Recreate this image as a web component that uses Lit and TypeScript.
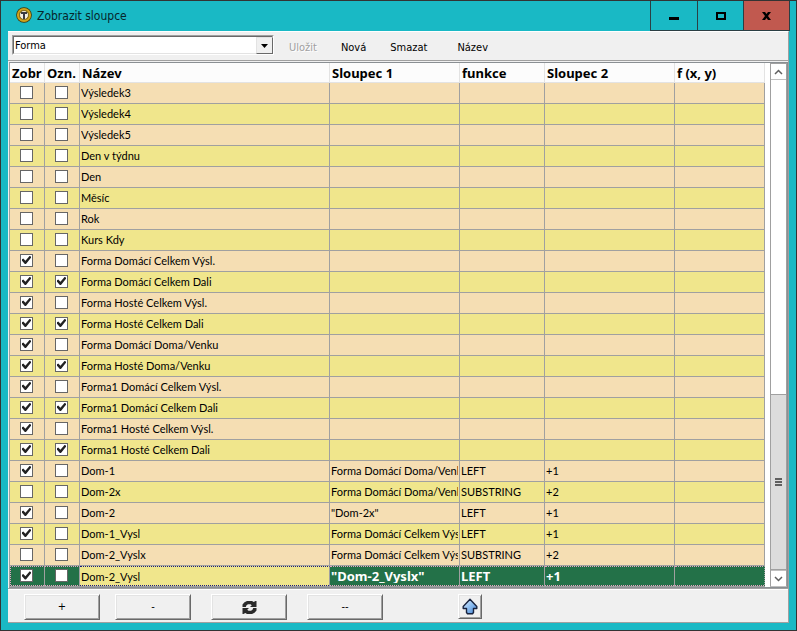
import { LitElement, html, css } from "lit";
import { customElement, state } from "lit/decorators.js";
import { classMap } from "lit/directives/class-map.js";

interface Row {
  show: boolean;
  mark: boolean;
  name: string;
  col1?: string;
  fn?: string;
  col2?: string;
}

const row = (show: number, mark: number, name: string, col1 = "", fn = "", col2 = ""): Row => ({
  show: !!show,
  mark: !!mark,
  name,
  col1,
  fn,
  col2,
});

@customElement("app-root")
export class AppRoot extends LitElement {
  static styles = css`
    :host {
      display: block;
      height: 100vh;
      font: 11px/14px "DejaVu Sans Condensed", Tahoma, "DejaVu Sans", sans-serif;
      color: #000;
    }
    * {
      box-sizing: border-box;
    }
    button,
    select {
      font: inherit;
      color: inherit;
      margin: 0;
      padding: 0;
      border-radius: 0;
    }
    .window {
      height: 100%;
      display: flex;
      flex-direction: column;
      background: #19b9c5;
      border: 1px solid #333;
      padding: 0 7px 7px;
      overflow: hidden;
    }
    .titlebar {
      flex: none;
      height: 30px;
      display: flex;
      align-items: flex-start;
      margin-right: -1px;
    }
    .logo {
      width: 16px;
      height: 16px;
      margin: 6px 5px 0 8px;
      flex: none;
    }
    .title {
      flex: 1;
      margin: 0;
      font-size: 12px;
      line-height: 30px;
      font-weight: normal;
      color: #06262b;
    }
    .sys {
      width: 47px;
      height: 30px;
      border: 1px solid #2b3f44;
      border-top: 0;
      border-right: 0;
      background: #19b9c5;
      display: grid;
      place-items: center;
    }
    .sys.max {
      width: 46px;
    }
    .sys.close {
      background: #c1594f;
      border-right: 1px solid #2b3f44;
    }
    .client {
      flex: 1;
      min-height: 0;
      display: flex;
      flex-direction: column;
      background: #f0f0f0;
      border-right: 1px solid #a0a0a0;
      border-bottom: 1px solid #a0a0a0;
      border-top: 1px solid #fff;
    }
    .toolbar {
      flex: none;
      height: 29px;
      display: flex;
      align-items: flex-start;
      padding: 3px 0 0 4px;
      border-bottom: 1px solid #a0a0a0;
    }
    .combo {
      position: relative;
      width: 262px;
      height: 20px;
      border: 1px solid #fff;
      border-top-color: #a0a0a0;
      border-left-color: #a0a0a0;
    }
    .combo select {
      appearance: none;
      display: block;
      width: 100%;
      height: 100%;
      border: 1px solid #e3e3e3;
      border-top-color: #696969;
      border-left-color: #696969;
      background: #fff;
      padding-left: 1px;
      padding-top: 1px;
      outline: 0;
    }
    .drop {
      position: absolute;
      top: 1px;
      right: 0;
      bottom: 0;
      width: 17px;
      background: #f0f0f0;
      border: 1px solid #696969;
      border-top-color: #e3e3e3;
      border-left-color: #e3e3e3;
      display: grid;
      place-items: center;
      pointer-events: none;
    }
    .tools {
      display: flex;
      gap: 24px;
      margin-left: 15px;
      padding-top: 1px;
    }
    .tool {
      border: 0;
      background: none;
      height: 24px;
    }
    .tool:disabled {
      color: #a0a0a0;
      text-shadow: 1px 1px #fff;
    }
    .tool:last-child {
      margin-left: 6px;
    }
    .grid {
      flex: 1;
      min-height: 0;
      margin: 1px 0 0 1px;
      display: flex;
      background: #fff;
      border: 1px solid #8a8f93;
      border-left-color: #a0a0a0;
      overflow: hidden;
    }
    .rows {
      flex: 1;
      min-width: 0;
      overflow: hidden;
      padding-right: 5px;
    }
    table {
      width: 100%;
      table-layout: fixed;
      border-collapse: separate;
      border-spacing: 0;
    }
    .c-check {
      width: 35px;
    }
    .c-name {
      width: 250px;
    }
    .c-wide {
      width: 130px;
    }
    .c-fn {
      width: 85px;
    }
    th {
      height: 20px;
      padding: 0 0 0 2px;
      text-align: left;
      font: bold 13px/18px "Noto Sans", Tahoma, sans-serif;
      white-space: nowrap;
      background: #fcfcfc;
      border-right: 1px solid #e3e3e3;
      border-bottom: 1px solid #e3e3e3;
    }
    td {
      height: 21px;
      padding: 0 1px;
      font: 11px/14px Lato, Tahoma, sans-serif;
      border-right: 1px solid #a0a0a0;
      border-bottom: 1px solid #a0a0a0;
    }
    .text {
      overflow: hidden;
      white-space: nowrap;
    }
    td.tick {
      padding: 0 1px 2px 0;
      line-height: 0;
      text-align: center;
    }
    tr.wheat td {
      background: #f5deb3;
    }
    tr.khaki td {
      background: #f0e68c;
    }
    tr.selected td {
      background: #237148 linear-gradient(90deg, #e6a3c4 50%, transparent 50%) 0 100% / 2px 1px repeat-x;
      border-top: 1px dotted #e6a3c4;
    }
    tr.selected td:not(.name) {
      padding-bottom: 2px;
      color: #fff;
      font: bold 13px/14px "Noto Sans", Tahoma, sans-serif;
    }
    tr.selected td.tick {
      line-height: 0;
    }
    tr.selected td:first-child {
      border-left: 1px dotted #e6a3c4;
      padding-right: 2px;
    }
    tr.selected td:last-child {
      border-right-style: dotted;
    }
    tr.selected td.name {
      background-color: #f0e68c;
      background-image: linear-gradient(90deg, #1a1a80 50%, transparent 50%);
      border-top-color: #1a1a80;
    }
    .box {
      appearance: none;
      width: 13px;
      height: 13px;
      margin: 0;
      border: 1px solid #666;
      background: #fff;
      display: inline-grid;
      place-items: center;
      vertical-align: middle;
    }
    .box:checked::before {
      content: "";
      width: 9px;
      height: 9px;
      background: #222;
      clip-path: polygon(0 42%, 14% 34%, 38% 58%, 86% 4%, 100% 14%, 100% 26%, 44% 94%, 32% 94%, 0 58%);
    }
    .scroll {
      flex: none;
      width: 17px;
      display: flex;
      flex-direction: column;
      border: 1px solid #a0a0a0;
      border-bottom-color: #c0c0c0;
    }
    .arrow {
      flex: none;
      height: 16px;
      border: 0;
      background: #fff;
      display: grid;
      place-items: center;
    }
    .arrow.up {
      border-bottom: 1px solid #c0c0c0;
    }
    .arrow.down {
      border-top: 1px solid #c0c0c0;
    }
    .track {
      flex: 1;
      display: flex;
      flex-direction: column;
    }
    .before {
      flex: 317;
    }
    .thumb {
      flex: 175;
      background: #dcdcdc;
      border-top: 1px solid #a0a0a0;
      border-bottom: 1px solid #a0a0a0;
      display: grid;
      place-items: center;
    }
    .bottom {
      flex: none;
      display: flex;
      align-items: flex-start;
      height: 34px;
      border-top: 1px solid #a0a0a0;
      box-shadow: inset 0 1px #fff;
      padding: 5px 0 0 16px;
    }
    .push {
      width: 76px;
      height: 26px;
      margin-right: 20px;
      background: #f0f0f0;
      border: 1px solid #696969;
      border-top-color: #fff;
      border-left-color: #fff;
      box-shadow: inset 1px 1px #e3e3e3, inset -1px -1px #a0a0a0;
      display: grid;
      place-items: center;
    }
    .push:first-child {
      margin-right: 15px;
    }
    .push.small {
      width: 24px;
      height: 25px;
      margin-left: 55px;
    }
  `;

  @state() private rows: Row[] = [
    row(0, 0, "Výsledek3"),
    row(0, 0, "Výsledek4"),
    row(0, 0, "Výsledek5"),
    row(0, 0, "Den v týdnu"),
    row(0, 0, "Den"),
    row(0, 0, "Měsíc"),
    row(0, 0, "Rok"),
    row(0, 0, "Kurs Kdy"),
    row(1, 0, "Forma Domácí Celkem Výsl."),
    row(1, 1, "Forma Domácí Celkem Dali"),
    row(1, 0, "Forma Hosté Celkem Výsl."),
    row(1, 1, "Forma Hosté Celkem Dali"),
    row(1, 0, "Forma Domácí Doma/Venku"),
    row(1, 1, "Forma Hosté Doma/Venku"),
    row(1, 0, "Forma1 Domácí Celkem Výsl."),
    row(1, 1, "Forma1 Domácí Celkem Dali"),
    row(1, 0, "Forma1 Hosté Celkem Výsl."),
    row(1, 1, "Forma1 Hosté Celkem Dali"),
    row(1, 0, "Dom-1", "Forma Domácí Doma/Venku", "LEFT", "+1"),
    row(0, 0, "Dom-2x", "Forma Domácí Doma/Venku", "SUBSTRING", "+2"),
    row(1, 0, "Dom-2", '"Dom-2x"', "LEFT", "+1"),
    row(1, 0, "Dom-1_Vysl", "Forma Domácí Celkem Výsl", "LEFT", "+1"),
    row(0, 0, "Dom-2_Vyslx", "Forma Domácí Celkem Výsl", "SUBSTRING", "+2"),
    row(1, 0, "Dom-2_Vysl", '"Dom-2_Vyslx"', "LEFT", "+1"),
  ];

  @state() private selected = 23;

  private renderRow(r: Row, i: number) {
    return html`<tr
      class=${classMap({ wheat: i % 2 === 0, khaki: i % 2 === 1, selected: i === this.selected })}
      @click=${() => (this.selected = i)}
    >
      <td class="tick"><input class="box" type="checkbox" aria-label="Zobrazit ${r.name}" .checked=${r.show} /></td>
      <td class="tick"><input class="box" type="checkbox" aria-label="Označit ${r.name}" .checked=${r.mark} /></td>
      <td class="name"><div class="text">${r.name}</div></td>
      <td><div class="text">${r.col1}</div></td>
      <td><div class="text">${r.fn}</div></td>
      <td><div class="text">${r.col2}</div></td>
      <td></td>
    </tr>`;
  }

  render() {
    return html`<div class="window">
      <header class="titlebar">
        <svg class="logo" viewBox="0 0 16 16" aria-hidden="true">
          <circle cx="8" cy="8" r="7.800" fill="#3f3208" />
          <circle cx="8" cy="8" r="6" fill="none" stroke="#cfa31c" stroke-width="2.200" />
          <circle cx="8" cy="8" r="4.500" fill="#f4f0e4" stroke="#8a6f14" stroke-width="1" />
          <path d="M5 5h6v2H9v5H7V7H5z" fill="#3a3a42" />
        </svg>
        <h1 class="title">Zobrazit sloupce</h1>
        <button class="sys" aria-label="Minimalizovat">
          <svg width="10" height="10"><path d="M0 6h10v3H0z" /></svg>
        </button>
        <button class="sys max" aria-label="Maximalizovat">
          <svg width="10" height="8"><path d="M1 1h8v6H1z" fill="none" stroke="#000" stroke-width="2" /></svg>
        </button>
        <button class="sys close" aria-label="Zavřít">
          <svg width="9" height="8"><path d="M0 0h3l1.500 2L6 0h3L6 4l3 4H6L4.500 6 3 8H0l3-4z" /></svg>
        </button>
      </header>
      <main class="client">
        <div class="toolbar">
          <div class="combo">
            <select aria-label="Šablona">
              <option>Forma</option>
            </select>
            <span class="drop"><svg width="7" height="4"><path d="M0 0h7L3.500 4z" /></svg></span>
          </div>
          <div class="tools">
            <button class="tool" disabled>Uložit</button>
            <button class="tool">Nová</button>
            <button class="tool">Smazat</button>
            <button class="tool">Název</button>
          </div>
        </div>
        <div class="grid">
          <div class="rows">
            <table>
              <colgroup>
                <col class="c-check" />
                <col class="c-check" />
                <col class="c-name" />
                <col class="c-wide" />
                <col class="c-fn" />
                <col class="c-wide" />
                <col />
              </colgroup>
              <thead>
                <tr>
                  <th>Zobr</th>
                  <th>Ozn.</th>
                  <th>Název</th>
                  <th>Sloupec 1</th>
                  <th>funkce</th>
                  <th>Sloupec 2</th>
                  <th>f (x, y)</th>
                </tr>
              </thead>
              <tbody>
                ${this.rows.map((r, i) => this.renderRow(r, i))}
              </tbody>
            </table>
          </div>
          <div class="scroll">
            <button class="arrow up" aria-label="Nahoru">
              <svg width="9" height="6"><path d="M1 5l3.500-3.500L8 5" fill="none" stroke="#606060" stroke-width="1.500" /></svg>
            </button>
            <div class="track">
              <div class="before"></div>
              <div class="thumb">
                <svg width="7" height="8"><path d="M0 0h7v2H0zM0 3h7v2H0zM0 6h7v2H0z" fill="#606060" /></svg>
              </div>
            </div>
            <button class="arrow down" aria-label="Dolů">
              <svg width="9" height="6"><path d="M1 1l3.500 3.500L8 1" fill="none" stroke="#606060" stroke-width="1.500" /></svg>
            </button>
          </div>
        </div>
        <footer class="bottom">
          <button class="push">+</button>
          <button class="push">-</button>
          <button class="push" aria-label="Obnovit">
            <svg width="15" height="13" viewBox="0 0 15 13">
              <path
                d="M.5 6V3.500L2.500 1.200 5 0h5l1.700 1L13.500 0H14.500v6H8L9.800 4.200 8.500 3.300H6L4.500 4.200 3.800 6zM14.500 7v2.500l-2 2.300L10 13H5l-1.700-1L1.500 13H.5V7H7L5.200 8.800l1.300.9H9l1.500-.9.7-1.800z"
                fill="#2a2a2a"
              />
            </svg>
          </button>
          <button class="push">--</button>
          <button class="push small" aria-label="Posunout nahoru">
            <svg width="16" height="17" viewBox="0 0 16 17">
              <defs>
                <linearGradient id="up" x1="0" y1="0" x2="1" y2="1">
                  <stop offset="0" stop-color="#e4f2ff" />
                  <stop offset="0.500" stop-color="#8dbdf0" />
                  <stop offset="1" stop-color="#3f7fd0" />
                </linearGradient>
              </defs>
              <path
                d="M8 1.200L14.800 8.500V10.500H11.500V14.500L10.500 15.800H5.500L4.500 14.500V10.500H1.200V8.500z"
                fill="url(#up)"
                stroke="#18233f"
                stroke-width="1.400"
                stroke-linejoin="round"
              />
            </svg>
          </button>
        </footer>
      </main>
    </div>`;
  }
}
